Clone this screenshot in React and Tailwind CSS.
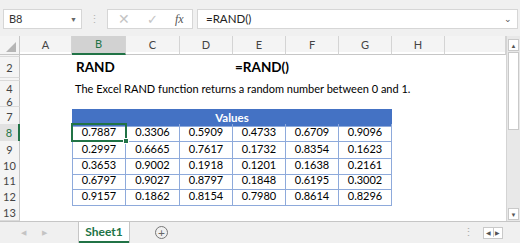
import React from "react";

const data = [
  ["0.7887", "0.3306", "0.5909", "0.4733", "0.6709", "0.9096"],
  ["0.2997", "0.6665", "0.7617", "0.1732", "0.8354", "0.1623"],
  ["0.3653", "0.9002", "0.1918", "0.1201", "0.1638", "0.2161"],
  ["0.6797", "0.9027", "0.8797", "0.1848", "0.6195", "0.3002"],
  ["0.9157", "0.1862", "0.8154", "0.7980", "0.8614", "0.8296"],
];

const GRID = "grid shrink-0 grid-cols-[20px_52px_54px_54px_53px_53px_53px_53px_53px_1fr]";

function RowHead({ label, sel }) {
  return (
    <div
      className={
        "flex items-center justify-center overflow-hidden border-b border-[#dadada] text-[11px] leading-none " +
        (sel
          ? "bg-[#e1e1e1] text-[#217346] border-r-2 border-r-[#217346]"
          : "bg-[#f4f4f4] text-[#444] border-r border-r-[#c6c6c6]")
      }
    >
      {label}
    </div>
  );
}

export default function App() {
  const font = { fontFamily: "Lato, 'Open Sans', sans-serif" };
  return (
    <div className="w-[520px] h-[243px] flex flex-col overflow-hidden bg-white select-none" style={font}>
      {/* formula bar */}
      <div className="h-[36px] bg-[#f0f0f0] flex items-start pt-[9px] pl-[3px] pr-[2px] shrink-0">
        <div className="w-[79px] h-[20px] bg-white border border-[#d6d6d6] flex items-center pl-[5px] pr-[4px] text-[11px] text-[#333]">
          <span className="flex-1">B8</span>
          <span className="text-[7px] text-[#666]">▼</span>
        </div>
        <div className="w-[25px] h-[20px] flex items-center justify-center text-[#b5b5b5] text-[11px]">⋮</div>
        <div className="w-[86px] h-[20px] bg-white border border-[#d6d6d6] flex items-center text-[#c4c4c4]">
          <span className="w-[30px] text-center text-[14px] leading-none ml-[1px]">✕</span>
          <span className="w-[29px] text-center text-[13px] leading-none">✓</span>
          <span
            className="w-[26px] text-center text-[12px] italic text-[#555] leading-none"
            style={{ fontFamily: "'Liberation Serif', serif" }}
          >
            fx
          </span>
        </div>
        <div className="ml-[4px] flex-1 h-[20px] bg-white border border-[#d6d6d6] flex items-center pl-[8px] pr-[5px] text-[11.5px] text-[#222]">
          <span className="flex-1">=RAND()</span>
          <span className="text-[9px] text-[#555]">⌄</span>
        </div>
      </div>

      {/* main area */}
      <div className="flex flex-1 min-h-0 border-b border-[#c6c6c6]">
        <div className="w-[506px] flex flex-col relative">
          {/* column headers */}
          <div className={GRID + " h-[16px] bg-[#f4f4f4] text-[11px] text-[#444]"}>
            <div className="relative border-r border-b border-[#c6c6c6]">
              <div className="absolute right-[3px] bottom-[2px] w-0 h-0 border-l-[10px] border-l-transparent border-b-[10px] border-b-[#b5b5b5]" />
            </div>
            {["A", "B", "C", "D", "E", "F", "G", "H", ""].map((c) => (
              <div
                key={c}
                className={
                  "flex items-center justify-center border-r border-[#d4d4d4] " +
                  (c === "B"
                    ? "bg-[#d2d2d2] text-[#217346] border-b-2 border-b-[#217346]"
                    : "border-b border-b-[#c6c6c6]")
                }
              >
                {c}
              </div>
            ))}
          </div>

          {/* row 1 */}
          <div className={GRID + " h-[5px]"}>
            <RowHead label="" />
          </div>
          {/* row 2 */}
          <div className={GRID + " h-[21px]"}>
            <RowHead label="2" />
            <div />
            <div className="col-span-3 flex items-center pl-[4px] text-[13.5px] font-bold text-black">RAND</div>
            <div className="col-span-3 flex items-center pl-[2px] text-[13.5px] font-bold text-black">=RAND()</div>
          </div>
          {/* row 3 */}
          <div className={GRID + " h-[3px]"}>
            <RowHead label="" />
          </div>
          {/* row 4 */}
          <div className={GRID + " h-[15px]"}>
            <RowHead label="4" />
            <div />
            <div className="col-span-7 flex items-center pl-[3px] text-[11px] text-black whitespace-nowrap">
              The Excel RAND function returns a random number between 0 and 1.
            </div>
          </div>
          {/* row 6 */}
          <div className={GRID + " h-[11px]"}>
            <RowHead label="6" />
          </div>
          {/* row 7 */}
          <div className={GRID + " h-[17px]"}>
            <RowHead label="7" />
            <div />
            <div className="col-span-6 mt-[2px] bg-[#4472c4] flex items-center justify-center text-white font-bold text-[11.5px] border-b border-[#8eaadb]">
              Values
            </div>
          </div>
          {/* data rows */}
          {data.map((r, i) => (
            <div key={i} className={GRID + (i === 0 ? " h-[17px]" : i === 2 ? " h-[15px]" : " h-[16px]")}>
              <RowHead label={String(8 + i)} sel={i === 0} />
              <div />
              {r.map((v, j) => (
                <div
                  key={j}
                  className={
                    "flex items-center justify-center text-[11px] text-black border-r border-b border-[#8eaadb] " +
                    (j === 0 ? "border-l" : "")
                  }
                >
                  {v}
                </div>
              ))}
            </div>
          ))}
          {/* row 13 */}
          <div className={GRID + " flex-1"}>
            <RowHead label="13" />
          </div>

          {/* selection overlay B8 */}
          <div className="absolute left-[71px] top-[87px] w-[56px] h-[19px] border-2 border-[#217346] pointer-events-none" />
          <div className="absolute left-[123px] top-[102px] w-[6px] h-[6px] bg-[#217346] border border-white pointer-events-none" />
        </div>

        {/* vertical scrollbar */}
        <div className="flex-1 bg-[#e8e8e8] border-l border-[#d4d4d4] flex flex-col items-center pt-[3px] pb-[1px]">
          <div className="w-[11px] h-[12px] bg-white border border-[#c9c9c9] flex items-center justify-center text-[6px] text-[#555]">▲</div>
          <div className="w-[11px] h-[78px] mt-[1px] bg-white border border-[#c9c9c9]" />
          <div className="flex-1" />
          <div className="w-[11px] h-[12px] bg-white border border-[#c9c9c9] flex items-center justify-center text-[6px] text-[#555]">▼</div>
        </div>
      </div>

      {/* sheet tabs */}
      <div className="h-[21px] bg-[#f0f0f0] flex items-stretch shrink-0 text-[#c4c4c4]">
        <div className="w-[79px] flex items-center text-[7px]">
          <span className="ml-[21px]">◀</span>
          <span className="ml-[16px]">▶</span>
        </div>
        <div className="w-[50px] bg-white flex items-center justify-center text-[12px] font-bold text-[#217346] border-b-2 border-[#217346] shadow-[1px_0_0_#c6c6c6,-1px_0_0_#c6c6c6]">
          Sheet1
        </div>
        <div className="ml-[26px] flex items-center">
          <div className="w-[13px] h-[13px] rounded-full border border-[#777] flex items-center justify-center text-[#666] text-[12px] leading-none">+</div>
        </div>
        <div className="flex-1" />
        <div className="flex items-center text-[#aaa] text-[11px] mr-[9px]">⋮</div>
        <div className="flex items-center mr-[17px]">
          <div className="w-[20px] h-[12px] bg-white border border-[#c9c9c9] flex items-center text-[6px] text-[#555]">
            <span className="flex-1 text-center border-r border-[#c9c9c9]">◀</span>
            <span className="flex-1 text-center">▶</span>
          </div>
        </div>
      </div>
    </div>
  );
}
